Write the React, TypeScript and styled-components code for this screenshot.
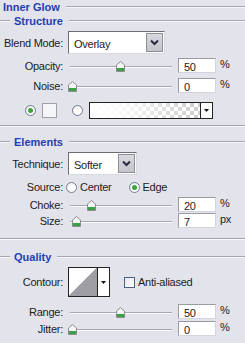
import React from "react";
import styled, { createGlobalStyle } from "styled-components";

const Global = createGlobalStyle`
  html, body { margin: 0; padding: 0; background: #e3e3eb; }
  body { font-family: "Liberation Sans", Arial, sans-serif; font-size: 11px; letter-spacing: -0.25px; color: #1c1c1c; }
`;

const Panel = styled.div`
  width: 245px;
  height: 343px;
  overflow: hidden;
  display: flex;
  flex-direction: column;
  background: #e3e3eb;
`;

const Heading = styled.div<{ $lead?: boolean; $mt: number }>`
  display: flex;
  align-items: center;
  height: 14px;
  margin-top: ${(p) => p.$mt}px;
  padding-left: ${(p) => (p.$lead ? 0 : 3)}px;
  font-weight: bold;
  letter-spacing: 0;
  color: #1f40b0;
  white-space: nowrap;
  &::before {
    content: "";
    display: ${(p) => (p.$lead ? "block" : "none")};
    width: 10px;
    border-top: 1px solid #a6a6ae;
    border-bottom: 1px solid #f6f6fa;
    margin-right: 4px;
  }
  &::after {
    content: "";
    flex: 1;
    border-top: 1px solid #a6a6ae;
    border-bottom: 1px solid #f6f6fa;
    margin-left: 6px;
  }
`;

const Separator = styled.div<{ $mt: number }>`
  margin-top: ${(p) => p.$mt}px;
  border-top: 1px solid #a2a2aa;
  border-bottom: 1px solid #f8f8fc;
`;

const Row = styled.div<{ $mt: number; $h: number }>`
  display: flex;
  align-items: center;
  height: ${(p) => p.$h}px;
  margin-top: ${(p) => p.$mt}px;
  flex: none;
`;

const Label = styled.span`
  width: 63px;
  flex: none;
  text-align: right;
  white-space: nowrap;
`;

const Select = styled.div<{ $w: number; $h: number }>`
  margin-left: 5px;
  width: ${(p) => p.$w}px;
  height: ${(p) => p.$h}px;
  box-sizing: border-box;
  background: #fff;
  border: 1px solid #6d6d75;
  border-right-color: #d8d8e0;
  border-bottom-color: #d8d8e0;
  display: flex;
  align-items: stretch;
  padding: 1px;
`;

const SelectText = styled.span`
  flex: 1;
  display: flex;
  align-items: center;
  padding-left: 4px;
  padding-top: 2px;
`;

const SelectButton = styled.span`
  width: 15px;
  flex: none;
  background: linear-gradient(#d8d8e0, #c4c4cc);
  border: 1px solid #8e8e96;
  display: flex;
  align-items: center;
  justify-content: center;
`;

const Track = styled.div`
  position: relative;
  margin-left: 7px;
  width: 102px;
  height: 15px;
  flex: none;
  &::before {
    content: "";
    position: absolute;
    left: 0;
    right: 0;
    top: 8px;
    border-top: 1px solid #a8a8b0;
    border-bottom: 1px solid #fbfbfd;
  }
`;

const Thumb = styled.svg`
  position: absolute;
  top: 3px;
  width: 9px;
  height: 11px;
`;

const NumBox = styled.div`
  margin-left: 6px;
  width: 38px;
  height: 15px;
  box-sizing: border-box;
  background: #fff;
  border: 1px solid #9a9aa2;
  border-right-color: #d4d4dc;
  border-bottom-color: #d4d4dc;
  padding: 2px 0 0 5px;
  line-height: 12px;
  flex: none;
`;

const Unit = styled.span`
  margin-left: 4px;
  margin-top: -4px;
`;

const Radio = styled.span<{ $on?: boolean; $ml: number }>`
  margin-left: ${(p) => p.$ml}px;
  width: 11px;
  height: 11px;
  box-sizing: border-box;
  border-radius: 50%;
  border: 1px solid #6e7f92;
  background: radial-gradient(circle at 60% 60%, #ffffff 40%, #e2e2ea 100%);
  flex: none;
  display: flex;
  align-items: center;
  justify-content: center;
  &::after {
    content: "";
    display: ${(p) => (p.$on ? "block" : "none")};
    width: 5px;
    height: 5px;
    border-radius: 50%;
    background: #3ca43c;
  }
`;

const OptionText = styled.span<{ $ml: number }>`
  margin-left: ${(p) => p.$ml}px;
`;

const Swatch = styled.span`
  margin-left: 6px;
  width: 15px;
  height: 15px;
  box-sizing: border-box;
  background: #f6f6fa;
  border: 1px solid #a0a0a8;
  flex: none;
`;

const GradientBox = styled.div`
  margin-left: 6px;
  width: 124px;
  height: 17px;
  box-sizing: border-box;
  border: 1px solid #222;
  display: flex;
  flex: none;
`;

const GradientFill = styled.span`
  flex: 1;
  background:
    linear-gradient(to right, #ffffff 0%, rgba(255,255,255,0.85) 30%, rgba(255,255,255,0) 95%),
    repeating-conic-gradient(#cfcfcf 0% 25%, #ffffff 0% 50%) 0 0 / 8px 8px;
`;

const ArrowCell = styled.span`
  width: 11px;
  flex: none;
  background: #fff;
  border-left: 1px solid #222;
  display: flex;
  align-items: center;
  justify-content: center;
`;

const ContourBox = styled.div`
  margin-left: 5px;
  width: 42px;
  height: 30px;
  box-sizing: border-box;
  border: 1px solid #222;
  display: flex;
  flex: none;
`;

const ContourFill = styled.span`
  flex: 1;
  background: linear-gradient(to top left, #9e9ea4 50%, #ffffff 50%);
`;

const Check = styled.span`
  margin-left: 14px;
  width: 11px;
  height: 11px;
  box-sizing: border-box;
  border: 1px solid #4a6282;
  background: linear-gradient(135deg, #e8e8ee, #ffffff);
  flex: none;
`;

const Chevron = () => (
  <svg width="9" height="7" viewBox="0 0 9 7">
    <path d="M1 1.5 L4.5 5 L8 1.5" fill="none" stroke="#2a2a40" strokeWidth="2" />
  </svg>
);

const Tri = () => (
  <svg width="5" height="3" viewBox="0 0 5 3">
    <path d="M0 0 H5 L2.5 3 Z" fill="#111" />
  </svg>
);

const SliderRow = ({
  label,
  frac,
  value,
  unit,
  mt,
}: {
  label: string;
  frac: number;
  value: string;
  unit: string;
  mt: number;
}) => (
  <Row $mt={mt} $h={15}>
    <Label>{label}</Label>
    <Track>
      <Thumb viewBox="0 0 9 11" style={{ left: `${2 + frac * 96 - 4.5}px` }}>
        <path d="M4.5 0.5 L8.5 4 V10.5 H0.5 V4 Z" fill="#f4f4f4" stroke="#8c8c8c" />
        <rect x="1" y="7" width="7" height="3" fill="#3aa04a" />
      </Thumb>
    </Track>
    <NumBox>{value}</NumBox>
    <Unit>{unit}</Unit>
  </Row>
);

export default function App() {
  return (
    <Panel>
      <Global />
      <Heading $mt={0}>Inner Glow</Heading>
      <Heading $lead $mt={0}>Structure</Heading>
      <Row $mt={3} $h={23}>
        <Label>Blend Mode:</Label>
        <Select $w={97} $h={23}>
          <SelectText>Overlay</SelectText>
          <SelectButton>
            <Chevron />
          </SelectButton>
        </Select>
      </Row>
      <SliderRow label="Opacity:" frac={0.5} value="50" unit="%" mt={4} />
      <SliderRow label="Noise:" frac={0} value="0" unit="%" mt={5} />
      <Row $mt={9} $h={17}>
        <Radio $on $ml={25} />
        <Swatch />
        <Radio $ml={15} />
        <GradientBox>
          <GradientFill />
          <ArrowCell>
            <Tri />
          </ArrowCell>
        </GradientBox>
      </Row>
      <Separator $mt={6} />
      <Heading $lead $mt={8}>Elements</Heading>
      <Row $mt={3} $h={23}>
        <Label>Technique:</Label>
        <Select $w={69} $h={23}>
          <SelectText>Softer</SelectText>
          <SelectButton>
            <Chevron />
          </SelectButton>
        </Select>
      </Row>
      <Row $mt={5} $h={14}>
        <Label>Source:</Label>
        <Radio $ml={3} />
        <OptionText $ml={3}>Center</OptionText>
        <Radio $on $ml={17} />
        <OptionText $ml={3}>Edge</OptionText>
      </Row>
      <SliderRow label="Choke:" frac={0.2} value="20" unit="%" mt={3} />
      <SliderRow label="Size:" frac={0.05} value="7" unit="px" mt={1} />
      <Separator $mt={10} />
      <Heading $lead $mt={10}>Quality</Heading>
      <Row $mt={3} $h={30}>
        <Label>Contour:</Label>
        <ContourBox>
          <ContourFill />
          <ArrowCell>
            <Tri />
          </ArrowCell>
        </ContourBox>
        <Check />
        <OptionText $ml={3}>Anti-aliased</OptionText>
      </Row>
      <SliderRow label="Range:" frac={0.5} value="50" unit="%" mt={7} />
      <SliderRow label="Jitter:" frac={0} value="0" unit="%" mt={2} />
    </Panel>
  );
}
